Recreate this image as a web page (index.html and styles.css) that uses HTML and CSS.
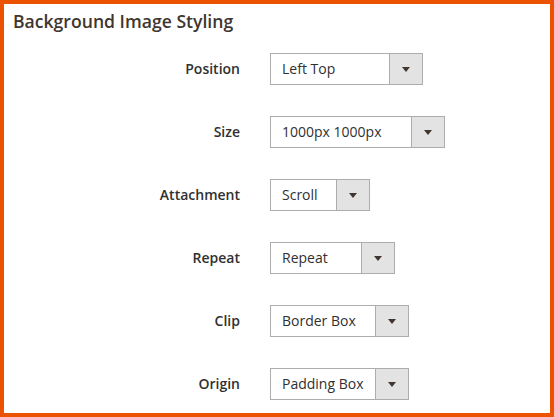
FILE: index.html
```html
<!DOCTYPE html>
<html lang="en">
<head>
<meta charset="utf-8">
<title>Background Image Styling</title>
<link rel="stylesheet" href="styles.css">
</head>
<body>
<div class="panel">
  <h2 class="title">Background Image Styling</h2>
  <div class="fields">
    <div class="label">Position</div>
    <div class="select w-position"><span class="value">Left Top</span><span class="arrow"></span></div>
    <div class="label">Size</div>
    <div class="select w-size"><span class="value">1000px 1000px</span><span class="arrow"></span></div>
    <div class="label">Attachment</div>
    <div class="select w-attachment"><span class="value">Scroll</span><span class="arrow"></span></div>
    <div class="label">Repeat</div>
    <div class="select w-repeat"><span class="value">Repeat</span><span class="arrow"></span></div>
    <div class="label">Clip</div>
    <div class="select w-box"><span class="value">Border Box</span><span class="arrow"></span></div>
    <div class="label">Origin</div>
    <div class="select w-box"><span class="value">Padding Box</span><span class="arrow"></span></div>
  </div>
</div>
</body>
</html>
```
FILE: styles.css
```css
* { box-sizing: border-box; }
html, body { margin: 0; padding: 0; background: #fff; }
body { font-family: "Open Sans", "Liberation Sans", sans-serif; color: #303030; }
.panel {
  width: 554px;
  height: 417px;
  border: 4px solid #eb5202;
  padding: 5px 9px 0 9px;
}
.title {
  margin: 0;
  font-size: 17.6px;
  line-height: 24px;
  font-weight: 600;
  color: #41362f;
}
.fields {
  margin-top: 20px;
  display: grid;
  grid-template-columns: 227px auto;
  column-gap: 30px;
  row-gap: 31px;
  align-items: center;
  justify-items: start;
}
.label {
  justify-self: end;
  font-size: 14px;
  font-weight: 600;
  color: #303030;
  line-height: 20px;
}
.select {
  display: flex;
  height: 32px;
  border: 1px solid #adadad;
  background: #fff;
}
.value {
  display: flex;
  align-items: center;
  padding-left: 11px;
  padding-bottom: 1px;
  font-size: 14px;
  color: #303030;
  white-space: nowrap;
}
.arrow {
  width: 33px;
  border-left: 1px solid #adadad;
  background: #e3e3e3;
  display: flex;
  align-items: center;
  justify-content: center;
}
.arrow::after {
  content: "";
  width: 0;
  height: 0;
  border-left: 4px solid transparent;
  border-right: 4px solid transparent;
  border-top: 5px solid #41362f;
}
.w-position .value { width: 118px; }
.w-size .value { width: 140px; }
.w-attachment .value { width: 65px; }
.w-repeat .value { width: 90px; }
.w-box .value { width: 104px; }
```
